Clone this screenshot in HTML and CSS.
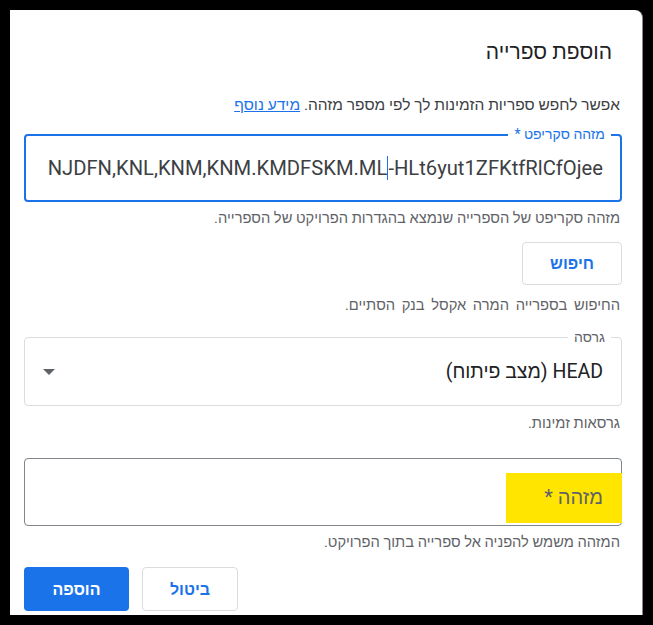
FILE: index.html
```html
<!DOCTYPE html>
<html lang="he" dir="rtl">
<head>
<meta charset="utf-8">
<link rel="stylesheet" href="styles.css">
</head>
<body>
<div class="dialog">
  <h1 class="title">הוספת ספרייה</h1>
  <p class="intro">אפשר לחפש ספריות הזמינות לך לפי מספר מזהה. <a href="#" class="link">מידע נוסף</a></p>

  <div class="field field-focused">
    <span class="label label-blue">מזהה סקריפט *</span>
    <div class="value value-script ltr">NJDFN,KNL,KNM,KNM.KMDFSKM.ML<span class="caret"></span>-HLt6yut1ZFKtfRlCfOjee</div>
  </div>
  <p class="hint hint-1">מזהה סקריפט של הספרייה שנמצא בהגדרות הפרויקט של הספרייה.</p>

  <div class="search-row">
    <button class="btn btn-outline">חיפוש</button>
  </div>
  <p class="hint hint-search">החיפוש בספרייה המרה אקסל בנק הסתיים.</p>

  <div class="field field-select">
    <span class="label label-gray">גרסה</span>
    <div class="value">HEAD (מצב פיתוח)</div>
    <span class="arrow"></span>
  </div>
  <p class="hint hint-3">גרסאות זמינות.</p>

  <div class="field field-id">
    <div class="placeholder"><span class="highlight">מזהה *</span></div>
  </div>
  <p class="hint hint-4">המזהה משמש להפניה אל ספרייה בתוך הפרויקט.</p>

  <div class="actions">
    <button class="btn btn-outline btn-cancel">ביטול</button>
    <button class="btn btn-primary">הוספה</button>
  </div>
</div>
</body>
</html>
```
FILE: styles.css
```css
html, body {
  margin: 0;
  padding: 0;
  background: #000;
}
body {
  width: 653px;
  height: 625px;
  overflow: hidden;
  font-family: Roboto, "Liberation Sans", Arial, sans-serif;
}
.dialog {
  margin: 10px 10px 0 10px;
  width: 633px;
  height: 605px;
  background: #fff;
  border-top-right-radius: 8px;
  border-right: 1px solid #8a8a8a;
  box-sizing: border-box;
  padding: 28px 20px 0 14px;
  display: flex;
  flex-direction: column;
  color: #3c4043;
}
.title {
  margin: 0 10px 0 0;
  font-size: 21px;
  font-weight: 400;
  line-height: 28px;
  color: #202124;
}
.intro {
  margin: 29px 2px 0 0;
  font-size: 15.5px;
  line-height: 20px;
  color: #3c4043;
}
.link {
  color: #1a73e8;
  text-decoration: underline;
}
.field {
  position: relative;
  margin-top: 19px;
  height: 68px;
  border: 1px solid #dadce0;
  border-radius: 4px;
  box-sizing: border-box;
  display: flex;
  align-items: center;
  padding: 0 18px 0 18px;
}
.field-focused {
  border: 2px solid #1a73e8;
  padding: 0 17px;
}
.field-select {
  margin-top: 23px;
  height: 69px;
}
.field-id {
  border-color: #80868b;
  margin-top: 26px;
  padding: 0;
  align-items: stretch;
}
.label {
  position: absolute;
  top: -10px;
  right: 10px;
  background: #fff;
  padding: 0 6px;
  font-size: 14px;
  line-height: 18px;
}
.field-focused .label { right: 9px; top: -11px; }
.label-blue { color: #1a73e8; }
.label-gray { color: #5f6368; }
.value {
  flex: 1;
  font-size: 20px;
  line-height: 26px;
  color: #3c4043;
  white-space: nowrap;
}
.value-script {
  font-size: 20.2px;
}
.ltr {
  direction: ltr;
  text-align: right;
}
.caret {
  display: inline-block;
  width: 1px;
  height: 24px;
  background: #1a73e8;
  vertical-align: -5px;
}
.field-select .value {
  color: #202124;
  font-size: 19.5px;
}
.arrow {
  width: 0;
  height: 0;
  border-left: 6px solid transparent;
  border-right: 6px solid transparent;
  border-top: 6px solid #5f6368;
}
.placeholder {
  flex: 1;
  display: flex;
  margin: 14px -1px 2px 0;
}
.highlight {
  background: #ffe500;
  display: flex;
  align-items: center;
  padding: 0 19px 2px 38px;
  font-size: 20px;
  color: #5f6368;
}
.hint {
  margin: 7px 2px 0 0;
  font-size: 14.7px;
  line-height: 18px;
  color: #5f6368;
}
.search-row {
  display: flex;
  margin-top: 15px;
}
.hint-search {
  margin-top: 11px;
  word-spacing: 3px;
}
.hint-3 { margin-top: 8px; }
.btn {
  font-family: Roboto, "Liberation Sans", Arial, sans-serif;
  font-size: 16px;
  font-weight: 700;
  height: 44px;
  border-radius: 4px;
  cursor: pointer;
}
.btn-outline {
  background: #fff;
  border: 1px solid #dadce0;
  color: #1a73e8;
  width: 100px;
  height: 43px;
}
.btn-cancel { width: 96px; height: 44px; }
.btn-primary {
  background: #1a73e8;
  border: none;
  color: #fff;
  width: 105px;
}
.actions {
  display: flex;
  justify-content: flex-end;
  gap: 13px;
  margin-top: 16px;
}
```
